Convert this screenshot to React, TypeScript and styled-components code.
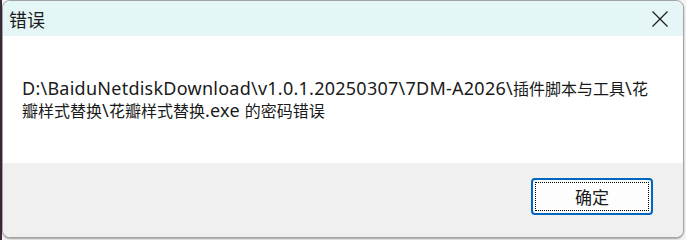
import React from "react";
import styled, { createGlobalStyle } from "styled-components";

const Global = createGlobalStyle`
  html, body { margin: 0; padding: 0; background: #f4f4f4; }
  body { width: 686px; height: 240px; overflow: hidden; }
`;

const Desk = styled.div`
  width: 686px;
  height: 240px;
  display: flex;
  background: linear-gradient(90deg, #3a2a3a 0, #3a2a3a 2px, #f4f4f4 2px);
`;

const Window = styled.div`
  margin-left: 2px;
  width: 682px;
  height: 238px;
  box-sizing: border-box;
  border: 1px solid #a3a3a3;
  border-radius: 8px;
  overflow: hidden;
  display: flex;
  flex-direction: column;
  background: #ffffff;
  font-family: "Segoe UI", "Noto Sans", "Noto Sans CJK SC", sans-serif;
  color: #1a1a1a;
  box-shadow: 0 1px 2px rgba(0, 0, 0, 0.35);
`;

const TitleBar = styled.div`
  height: 35px;
  flex: none;
  background: #e4f7f6;
  display: flex;
  align-items: center;
  justify-content: space-between;
  padding-left: 6px;
`;

const Title = styled.div`
  font-family: "Noto Sans CJK SC", sans-serif;
  font-size: 18px;
  line-height: 20px;
  margin-top: 1px;
`;

const CloseBtn = styled.div`
  width: 46px;
  height: 35px;
  display: flex;
  align-items: center;
  justify-content: center;
  margin-right: 0px;
`;

const Body = styled.div`
  height: 127px;
  flex: none;
  padding: 41px 0 0 19px;
  box-sizing: border-box;
`;

const Message = styled.div`
  font-size: 18px;
  letter-spacing: 0.25px;
  line-height: 22px;
  font-family: "Noto Sans", "Noto Sans CJK SC", sans-serif;
`;

const Cjk = styled.span`
  font-family: "Noto Sans CJK SC", sans-serif;
  font-size: 16px;
  letter-spacing: 0;
`;

const Footer = styled.div`
  flex: 1;
  background: #f0f0f0;
  display: flex;
  justify-content: flex-end;
  align-items: flex-start;
  padding: 15px 30px 0 0;
`;

const Button = styled.button`
  width: 122px;
  height: 37px;
  box-sizing: border-box;
  border: 2px solid #0067c0;
  border-radius: 4px;
  background: #fdfdfd;
  padding: 2px;
  display: flex;
  cursor: default;
`;

const FocusRing = styled.span`
  flex: 1;
  border: 1px dotted #000;
  display: flex;
  align-items: center;
  justify-content: center;
  font-family: "Noto Sans CJK SC", sans-serif;
  font-size: 17px;
  color: #1a1a1a;
`;

export default function App() {
  return (
    <>
      <Global />
      <Desk>
        <Window>
          <TitleBar>
            <Title>错误</Title>
            <CloseBtn>
              <svg width="16" height="16" viewBox="0 0 16 16">
                <path d="M0.5 0.5 L15.5 15.5 M15.5 0.5 L0.5 15.5" stroke="#1a1a1a" strokeWidth="1.2" fill="none" />
              </svg>
            </CloseBtn>
          </TitleBar>
          <Body>
            <Message>
              D:\BaiduNetdiskDownload\v1.0.1.20250307\7DM-A2026\<Cjk>插件脚本与工具</Cjk>\<Cjk>花</Cjk>
              <br />
              <Cjk>瓣样式替换</Cjk>\<Cjk>花瓣样式替换</Cjk>.exe <Cjk>的密码错误</Cjk>
            </Message>
          </Body>
          <Footer>
            <Button>
              <FocusRing>确定</FocusRing>
            </Button>
          </Footer>
        </Window>
      </Desk>
    </>
  );
}
